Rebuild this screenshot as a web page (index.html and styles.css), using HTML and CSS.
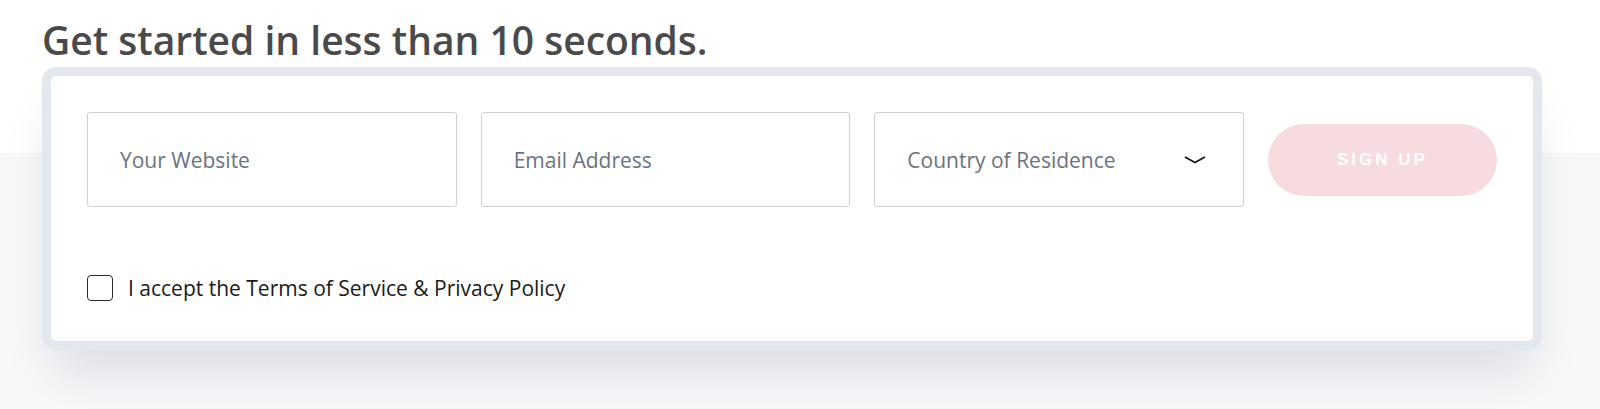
FILE: index.html
```html
<!DOCTYPE html>
<html lang="en">
<head>
    <meta charset="UTF-8">
    <meta name="viewport" content="width=device-width, initial-scale=1.0">
    <title>Sign up</title>
    <link rel="stylesheet" href="styles.css">
</head>
<body>
    <div class="signup">
        <h2 class="signup-title">Get started in less than 10 seconds.</h2>
        <form class="signup-card">
            <div class="signup-row">
                <input class="field" type="text" placeholder="Your Website">
                <input class="field" type="email" placeholder="Email Address">
                <div class="field select">
                    <span>Country of Residence</span>
                    <svg class="chevron" width="22" height="8" viewBox="0 0 22 8">
                        <path d="M1 1 L11 6.5 L21 1" fill="none" stroke="#111" stroke-width="1.6"/>
                    </svg>
                </div>
                <button class="btn" type="button">SIGN UP</button>
            </div>
            <label class="terms">
                <span class="box"></span>
                I accept the Terms of Service &amp; Privacy Policy
            </label>
        </form>
    </div>
</body>
</html>
```

FILE: styles.css
```css
* {
    margin: 0;
    padding: 0;
    box-sizing: border-box;
}
body {
    font-family: "Open Sans", "Noto Sans", sans-serif;
    background: linear-gradient(#fff 0, #fff 153px, #f7f8fa 153px);
    min-height: 409px;
}
.signup {
    padding: 17px 58px 0 42px;
}
.signup-title {
    font-size: 39px;
    line-height: 46px;
    font-weight: 600;
    color: #4a4a4a;
    margin-bottom: 4px;
}
.signup-card {
    width: 1500px;
    background: #fff;
    border: 9px solid #e3e8ef;
    border-radius: 14px;
    padding: 36px 36px 38px;
    box-shadow: 0 34px 50px -12px rgba(40, 50, 70, 0.13);
}
.signup-row {
    display: grid;
    grid-template-columns: 1fr 1fr 1fr 229px;
    column-gap: 24px;
    align-items: center;
}
.field {
    height: 95px;
    border: 1px solid #cfcfcf;
    border-radius: 3px;
    padding: 0 32px;
    font: 21px "Open Sans", sans-serif;
    color: #6b7280;
    background: #fff;
    outline: none;
}
.field::placeholder {
    color: #6b7280;
}
.select {
    display: flex;
    align-items: center;
    justify-content: space-between;
    padding-right: 37px;
}
.chevron {
    display: block;
}
.btn {
    height: 72px;
    border: none;
    border-radius: 36px;
    background: #f8dbde;
    color: #fff;
    font: bold 17px "Liberation Sans", Arial, sans-serif;
    letter-spacing: 3px;
}
.terms {
    display: flex;
    align-items: center;
    gap: 15px;
    margin-top: 66px;
    font-size: 21px;
    line-height: 30px;
    color: #1a1a1a;
}
.box {
    width: 26px;
    height: 26px;
    border: 1.5px solid #2a2a2a;
    border-radius: 4px;
}
```
